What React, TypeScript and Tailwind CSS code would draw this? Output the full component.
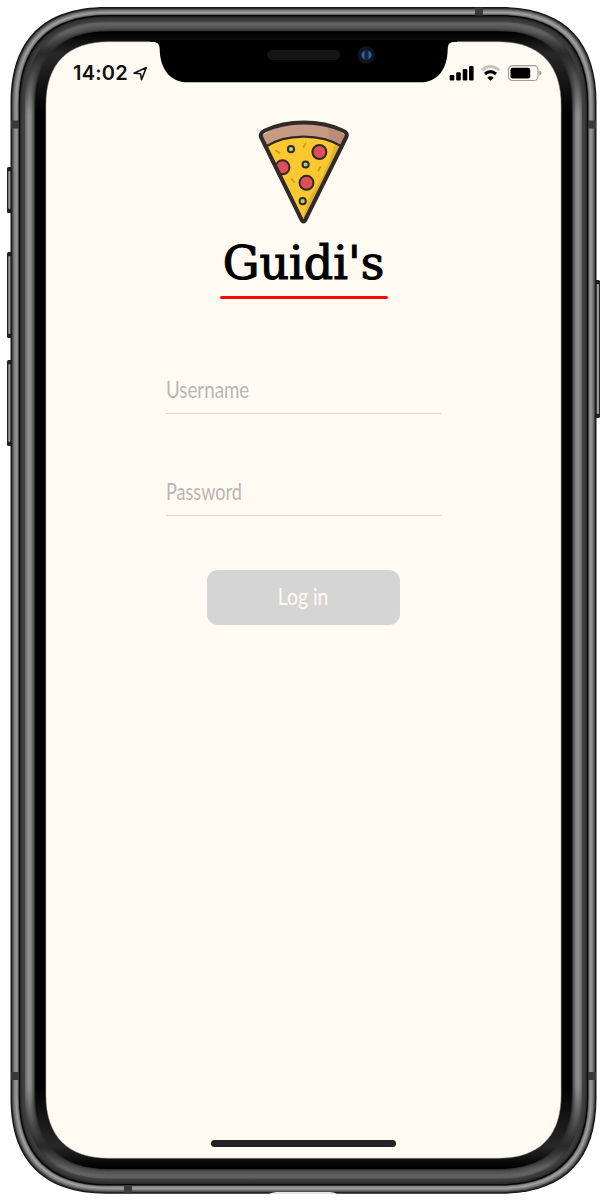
import React from "react";

/* Closed outline with continuous (squircle-like) corners, inset from the outer case. */
function outline(inset: number, radius: number) {
  const l = 10.5 + inset;
  const t = 7 + inset * 0.98;
  const r = 596.5 - inset;
  const b = 1193.7 - inset;
  const e = radius * 1.15;
  const h = radius * 0.398;
  return `M${l + e} ${t}H${r - e}C${r - h} ${t} ${r} ${t + h} ${r} ${t + e}V${b - e}C${r} ${b - h} ${r - h} ${b} ${r - e} ${b}H${l + e}C${l + h} ${b} ${l} ${b - h} ${l} ${b - e}V${t + e}C${l} ${t + h} ${l + h} ${t} ${l + e} ${t}Z`;
}

/* [inset, colour on the long sides, colour on the top and bottom] */
const rings: [number, string, string][] = [
  [0, "#161616", "#161616"],
  [1.2, "#303030", "#303030"],
  [2, "#5c5c5c", "#555555"],
  [3, "#777777", "#777777"],
  [4, "#858485", "#8c8b8c"],
  [5, "#999799", "#a2a0a2"],
  [6.2, "#898789", "#8a898a"],
  [7.4, "#626162", "#5d5d5d"],
  [8.2, "#0b0b0b", "#080808"],
  [9.7, "#303030", "#292929"],
  [11, "#3c3c3d", "#363636"],
  [13, "#414142", "#3d3d3d"],
  [14.5, "#6a6a6a", "#4b4b4b"],
  [15.5, "#7c7c7c", "#606060"],
  [17, "#8d8d8d", "#626262"],
  [18.5, "#8e8e8e", "#5b5b5b"],
  [20, "#7e7e7e", "#555555"],
  [21.5, "#686868", "#4d4d4d"],
  [22.7, "#505050", "#434343"],
  [23.7, "#292929", "#303030"],
  [24.7, "#000000", "#000000"],
];

function Device() {
  return (
    <svg className="absolute inset-0" width="607" height="1200" viewBox="0 0 607 1200" aria-hidden="true">
      <defs>
        {rings.map(([d, side, end], i) => (
          <linearGradient key={d} id={`ring${i}`} gradientUnits="userSpaceOnUse" x1="0" y1="0" x2="0" y2="1200">
            <stop offset="0.027" stopColor={end} />
            <stop offset="0.045" stopColor={d > 13 ? "#282828" : end} />
            <stop offset="0.095" stopColor={side} />
            <stop offset="0.905" stopColor={side} />
            <stop offset="0.955" stopColor={d > 13 ? "#282828" : end} />
            <stop offset="0.973" stopColor={end} />
          </linearGradient>
        ))}
      </defs>
      {[
        [7, 168, 44, 8.3],
        [7, 253, 84, 8.3],
        [7, 361, 84, 8.3],
        [594, 281, 136, 596.5],
      ].map(([x, y, h, face]) => (
        <g key={`${x}-${y}`}>
          <rect x={x} y={y - 1} width="6" height={h + 2} rx="1.5" fill="#222" />
          <rect x={face} y={y + 3} width="2.5" height={h - 6} rx="1" fill="#9a9a9a" />
        </g>
      ))}
      {rings.map(([d], i) => (
        <path key={d} d={outline(d, 83 - d * 0.78)} fill={`url(#ring${i})`} />
      ))}
      <g fill="#393939">
        <rect x="11" y="120.500" width="8" height="8" />
        <rect x="588" y="120.500" width="8" height="8" />
        <rect x="11" y="1072" width="8" height="8" />
        <rect x="588" y="1072" width="8" height="8" />
        <rect x="475" y="7.500" width="8" height="8" />
        <rect x="124" y="1185.500" width="8" height="8" />
      </g>
      <path d="M269 1194C274 1192 276 1192 281 1192H327C331 1192 333 1192 337 1194Z" fill="#e6e4e5" />
      <path d={outline(35.4, 55)} fill="#fffbf3" stroke="#8e8b86" strokeWidth="0.5" />
      <path
        d="M150 40V41.700C157 41.700 159.500 43 159.700 49C160 69 170 82.300 188 82.300H420C438 82.300 447.500 69 447.700 49C448 43 450 41.700 457 41.700V40Z"
        fill="#000"
      />
      <rect x="267" y="50" width="73" height="10" rx="5" fill="#151515" />
      <circle cx="366.300" cy="55" r="8.800" fill="#11141a" />
      <circle cx="366.300" cy="55" r="5.400" fill="#142544" />
      <path d="M364.500 51C360.500 52.500 360.500 57.500 364.500 59Z M368.500 51C372.500 52.500 372.500 57.500 368.500 59Z" fill="#2d62a5" />
    </svg>
  );
}

function StatusIcons() {
  return (
    <svg width="94" height="18" viewBox="449 64 94 18" aria-label="Signal, Wi-Fi and battery">
      <rect x="449.700" y="75" width="4.600" height="5.500" rx="1.200" />
      <rect x="456.200" y="72.300" width="4.600" height="8.200" rx="1.200" />
      <rect x="462.700" y="69" width="4.600" height="11.500" rx="1.200" />
      <rect x="469" y="66" width="4.600" height="14.500" rx="1.200" />
      <path d="M481.800 70.200Q490.500 62.700 499.200 70.200" fill="none" stroke="#c8c5bf" strokeWidth="3" />
      <path d="M485 73.900Q490.500 69.500 496 73.900" fill="none" stroke="#000" strokeWidth="3.200" />
      <path d="M487.300 77.700Q490.500 75 493.700 77.700L490.500 80.700Z" />
      <rect x="508.500" y="65.700" width="29.500" height="14.800" rx="4" fill="none" stroke="#a09d99" strokeWidth="1.200" />
      <rect x="510.500" y="67.800" width="19.700" height="10.600" rx="2.200" />
      <path d="M539.300 70.800C542.300 71.500 542.300 74.700 539.300 75.400Z" fill="#a09d99" />
    </svg>
  );
}

function PizzaLogo() {
  return (
    <svg width="92" height="106" viewBox="258 119 92 106" aria-label="Pizza slice">
      <defs>
        <clipPath id="slice">
          <path d="M261 136Q280 123 303.700 123Q328 123 347 136L303.700 222Z" />
        </clipPath>
      </defs>
      <g clipPath="url(#slice)">
        <path d="M255 115H350V225H255Z" fill="#fbc92f" />
        <path d="M335 143Q330 164 317 186Q306 199 303 222H312L350 150Z" fill="#deb22f" />
        <path d="M258 118H350V150Q330 137 303.700 137Q278 137 258 150Z" fill="#c79a83" />
        <path d="M324 118H350V150Q340 142 329 139Q330 130 324 118Z" fill="#b98e79" />
        <path d="M265 147Q281 136.700 303.700 136.700Q326 136.700 343 147" fill="none" stroke="#302b28" strokeWidth="2.300" />
        <g stroke="#302b28" strokeWidth="2" fill="#dc4e59">
          <circle cx="319.400" cy="152" r="7" />
          <circle cx="282.500" cy="167.300" r="7" />
          <circle cx="306.500" cy="182.800" r="7" />
        </g>
        <g stroke="#302b28" strokeWidth="2" fill="#add07c">
          <circle cx="291" cy="149.200" r="3.100" />
          <circle cx="305.600" cy="164.500" r="3.100" />
          <circle cx="302.700" cy="201.200" r="3.100" />
        </g>
        <path d="M276 150.500L279.500 153M303.500 147L305.500 143.500M318.500 170.500L320.300 167M291.500 179L294 182" stroke="#c49d2c" strokeWidth="1.800" strokeLinecap="round" />
      </g>
      <path
        d="M261 137C260 134 262 132 265 130.500Q282 122.500 303.700 122.500Q326 122.500 342.500 130.500C346 132 347.700 134 346.300 137L306 218.500C304.500 222.500 302.500 222.500 301 218.500Z"
        fill="none"
        stroke="#302b28"
        strokeWidth="4"
        strokeLinejoin="round"
      />
    </svg>
  );
}

function Field({ label, labelClass }: { label: string; labelClass: string }) {
  return (
    <label className="flex h-[42px] w-[275px] items-start border-b border-[#d9d6cf]">
      <span className={`origin-left whitespace-nowrap text-[23px] leading-[34px] text-[#b8b6b2] ${labelClass}`}>{label}</span>
    </label>
  );
}

export default function App() {
  return (
    <main className="relative h-[1200px] w-[607px] overflow-hidden bg-white font-['Lato','Liberation_Sans',sans-serif]">
      <Device />
      <div className="relative flex h-full flex-col items-center pt-[64px]">
        <header className="flex h-[18px] w-full items-center justify-between pl-[73px] pr-[64px]">
          <div className="flex items-center gap-[3px]">
            <span className="w-[57px] whitespace-nowrap font-['Inter',sans-serif] text-[20px] font-semibold leading-[18px] tracking-[0.2px] text-[#111]">14:02</span>
            <svg width="15" height="15" viewBox="0 0 15 15" aria-hidden="true">
              <path d="M1 7.300L13.300 1.600L8.500 13.600L7.500 7.700Z" fill="none" stroke="#151515" strokeWidth="1.600" strokeLinejoin="round" />
            </svg>
          </div>
          <StatusIcons />
        </header>
        <div className="mt-[37px] flex flex-col items-center">
          <PizzaLogo />
          <h1 className="mt-[8px] h-[63px] whitespace-nowrap font-['DejaVu_Serif',serif] text-[46px] leading-[60px] text-black [-webkit-text-stroke:1.1px_black]">Guidi's</h1>
          <div className="h-[3px] w-[168px] rounded-full bg-[#ff0808]" />
        </div>
        <form className="mt-[73px] flex flex-col items-center" onSubmit={(event) => event.preventDefault()}>
          <Field label="Username" labelClass="scale-x-[0.815]" />
          <div className="h-[60px]" />
          <Field label="Password" labelClass="scale-x-[0.785]" />
          <button type="submit" className="mt-[54px] flex h-[55px] w-[193px] items-center justify-center rounded-[11px] bg-[#d5d5d5] pb-[2px] text-[23px] text-[#fffaf2]">
            <span className="scale-x-[0.84]">Log in</span>
          </button>
        </form>
        <div className="mt-auto mb-[53px] h-[7px] w-[185px] rounded-full bg-[#232323]" />
      </div>
    </main>
  );
}
